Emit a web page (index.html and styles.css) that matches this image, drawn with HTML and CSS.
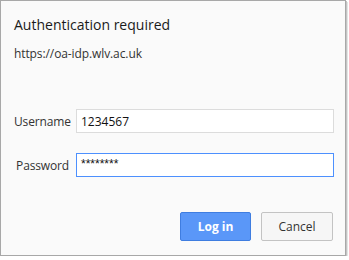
FILE: index.html
```html
<!DOCTYPE html>
<html>
<head>
<meta charset="utf-8">
<link rel="stylesheet" href="styles.css">
</head>
<body>
<div class="dialog">
  <div class="title">Authentication required</div>
  <div class="origin">https://oa-idp.wlv.ac.uk</div>
  <div class="form">
    <label class="label" for="u">Username</label>
    <input class="field" id="u" type="text" value="1234567">
    <label class="label" for="p">Password</label>
    <div class="field focused mask">********</div>
  </div>
  <div class="buttons">
    <button class="btn primary">Log in</button>
    <button class="btn">Cancel</button>
  </div>
</div>
</body>
</html>
```
FILE: styles.css
```css
html, body {
  margin: 0;
  padding: 0;
  background: #ffffff;
}
body {
  font-family: "Open Sans", "Noto Sans", sans-serif;
  font-size: 12px;
  color: #222;
}
.dialog {
  box-sizing: border-box;
  width: 346px;
  height: 256px;
  border: 1px solid #a8a8a8;
  background: #fafafa;
  box-shadow: 1px 1px 0 #c4c4c4, 2px 2px 0 #e4e4e4;
  padding: 14px 11px 0 13px;
  display: flex;
  flex-direction: column;
}
.title {
  font-size: 14px;
  line-height: 20px;
  color: #1a1a1a;
}
.origin {
  margin-top: 11px;
  line-height: 16px;
  color: #333;
  letter-spacing: -0.1px;
}
.form {
  margin-top: 47px;
  display: grid;
  grid-template-columns: 55px 1fr;
  column-gap: 7px;
  row-gap: 20px;
  align-items: center;
}
.label {
  text-align: right;
  color: #333;
  letter-spacing: -0.15px;
}
.field {
  box-sizing: border-box;
  height: 24px;
  margin: 0;
  border: 1px solid #dcdcdc;
  background: #fff;
  padding: 0 4px;
  font-family: inherit;
  font-size: 12px;
  color: #111;
  line-height: 22px;
  outline: none;
}
.focused {
  border-color: #4d90fe;
}
.mask {
  font-family: "Liberation Sans", Arial, sans-serif;
  line-height: 20px;
}
.buttons {
  margin-top: 35px;
  display: flex;
  justify-content: flex-end;
  gap: 10px;
  padding-right: 1px;
}
.btn {
  box-sizing: border-box;
  width: 72px;
  height: 29px;
  border: 1px solid #c3c3c3;
  border-radius: 2px;
  background: #f6f6f6;
  color: #333;
  font-family: inherit;
  font-size: 12px;
  padding: 0;
}
.primary {
  width: 71px;
  background: #5a97f8;
  border-color: #3f7de0;
  color: #fff;
  font-weight: bold;
}
```
